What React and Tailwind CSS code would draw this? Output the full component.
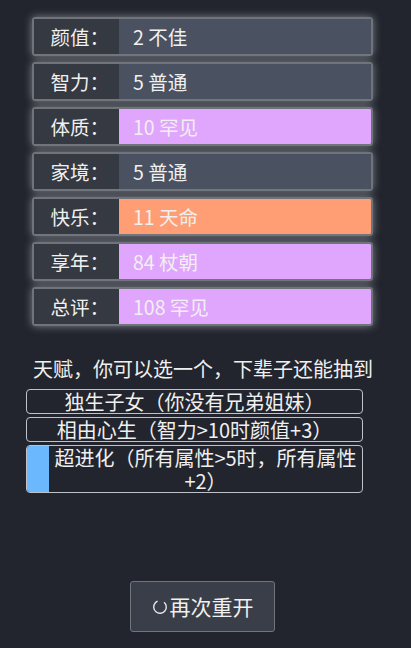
import React from "react";

const rows = [
  { label: "颜值", value: "2 不佳", tone: "bg-[#4a5160]" },
  { label: "智力", value: "5 普通", tone: "bg-[#4a5160]" },
  { label: "体质", value: "10 罕见", tone: "bg-[#e0a5fc]" },
  { label: "家境", value: "5 普通", tone: "bg-[#4a5160]" },
  { label: "快乐", value: "11 天命", tone: "bg-[#ff9e75]" },
  { label: "享年", value: "84 杖朝", tone: "bg-[#e0a5fc]" },
  { label: "总评", value: "108 罕见", tone: "bg-[#e0a5fc]" },
];

const talents = [
  { text: "独生子女（你没有兄弟姐妹）" },
  { text: "相由心生（智力>10时颜值+3）" },
  { text: "超进化（所有属性>5时，所有属性+2）", picked: true },
];

const font = { fontFamily: '"Noto Sans CJK SC", "Noto Sans", sans-serif' };

export default function App() {
  return (
    <div
      className="w-[411px] h-[648px] bg-[#22252d] text-[#f0f0f0] flex flex-col"
      style={font}
    >
      {/* 属性列表 */}
      <div className="flex flex-col gap-[6px] pt-[17px] pl-[32px] pr-[38px]">
        {rows.map((r) => (
          <div
            key={r.label}
            className="flex h-[39px] rounded-[3px] border-2 border-[#6f737a] overflow-hidden shadow-[0_0_8px_rgba(220,225,235,0.5)]"
          >
            <div className="w-[85px] shrink-0 bg-[#353941] flex items-center justify-end pr-[10px] text-[19.5px]">
              {r.label}：
            </div>
            <div className={`flex-1 flex items-center pl-[14px] text-[19.5px] ${r.tone}`}>
              {r.value}
            </div>
          </div>
        ))}
      </div>

      {/* 天赋 */}
      <div className="mt-[30px] text-center text-[20px] leading-[26px] pr-[5px]">
        天赋，你可以选一个，下辈子还能抽到
      </div>
      <div className="flex flex-col gap-[3px] mt-[7px] pl-[26px] pr-[48px]">
        {talents.map((t) => (
          <div
            key={t.text}
            className="flex rounded-[4px] border border-[#bfc2c8]"
          >
            {t.picked && (
              <div className="w-[22px] shrink-0 bg-[#6cb8ff] rounded-l-[3px]" />
            )}
            <div className="flex-1 text-center text-[20px] leading-[23px] px-[4px]">
              {t.text}
            </div>
          </div>
        ))}
      </div>

      {/* 重开按钮 */}
      <div className="flex-1" />
      <div className="flex justify-center pb-[16px] pr-[6px]">
        <button className="w-[145px] h-[51px] rounded-[3px] border border-[#70747b] bg-[#3a3e48] flex items-center justify-center text-[21px] text-[#f0f0f0]">
          <svg width="16" height="16" viewBox="0 0 16 16" className="mr-[2px]">
            <circle
              cx="8"
              cy="8"
              r="6.3"
              fill="none"
              stroke="#e6e6e6"
              strokeWidth="1.4"
              strokeDasharray="32 8"
              transform="rotate(-50 8 8)"
            />
          </svg>
          再次重开
        </button>
      </div>
    </div>
  );
}
